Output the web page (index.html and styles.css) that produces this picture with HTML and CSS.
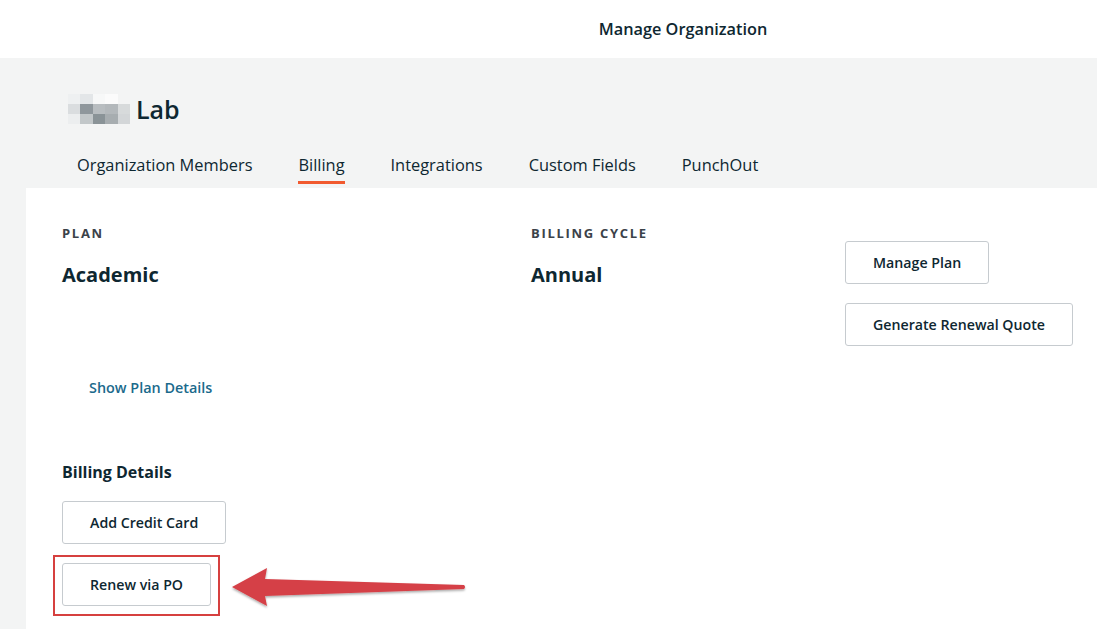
FILE: index.html
```html
<!DOCTYPE html>
<html lang="en">

<head>
    <meta charset="UTF-8">
    <meta name="viewport" content="width=device-width, initial-scale=1.0">
    <title>Manage Organization</title>
    <link rel="stylesheet" href="styles.css">
</head>

<body>
    <header class="topbar">
        <h1 class="topbar-title">Manage Organization</h1>
    </header>

    <main class="page">
        <div class="org-head">
            <div class="org-logo">
                <span style="background:#eef0f1"></span><span style="background:#e3e6e8"></span><span style="background:#f7f8f8"></span><span style="background:#fbfbfb"></span><span style="background:#f3f4f4"></span>
                <span style="background:#dadddf"></span><span style="background:#8f979c"></span><span style="background:#b8bdc0"></span><span style="background:#b3b8bb"></span><span style="background:#d7dadb"></span>
                <span style="background:#eceeef"></span><span style="background:#c2c7c9"></span><span style="background:#8a9397"></span><span style="background:#a7adb0"></span><span style="background:#d3d6d8"></span>
            </div>
            <h2 class="org-name">Lab</h2>
        </div>

        <nav class="tabs">
            <a class="tab">Organization Members</a>
            <a class="tab active">Billing</a>
            <a class="tab">Integrations</a>
            <a class="tab">Custom Fields</a>
            <a class="tab">PunchOut</a>
        </nav>

        <section class="panel">
            <div class="plan-row">
                <div class="plan-col">
                    <div class="label">PLAN</div>
                    <div class="value">Academic</div>
                </div>
                <div class="cycle-col">
                    <div class="label">BILLING CYCLE</div>
                    <div class="value">Annual</div>
                </div>
                <div class="actions">
                    <button class="btn">Manage Plan</button>
                    <button class="btn">Generate Renewal Quote</button>
                </div>
            </div>

            <a class="link-btn">Show Plan Details</a>

            <h3 class="section-title">Billing Details</h3>
            <div class="billing-actions">
                <button class="btn">Add Credit Card</button>
                <div class="highlight">
                    <button class="btn">Renew via PO</button>
                </div>
                <!-- annotation arrow -->
                <svg class="arrow" width="250" height="50" viewBox="0 0 250 50">
                    <defs>
                        <filter id="shadow" x="-10%" y="-30%" width="120%" height="160%">
                            <feDropShadow dx="0" dy="1.5" stdDeviation="1.2" flood-color="#000" flood-opacity="0.35" />
                        </filter>
                    </defs>
                    <path d="M2 23 L37 4 L35 15 L234 21 Q236 23 234 25 L35 32 L37 42 Z" fill="#d54047" filter="url(#shadow)" />
                </svg>
            </div>
        </section>
    </main>
</body>

</html>
```

FILE: styles.css
```css
* {
    box-sizing: border-box;
}

body {
    margin: 0;
    font-family: "Open Sans", sans-serif;
    color: #0e2731;
    background: #f3f4f4;
}

.topbar {
    height: 58px;
    background: #fff;
    display: flex;
    align-items: center;
    justify-content: center;
}

.topbar-title {
    margin: 0 0 0 269px;
    font-size: 16.3px;
    font-weight: 600;
}

.page {
    padding-left: 26px;
}

.org-head {
    display: flex;
    align-items: center;
    gap: 6px;
    padding: 12px 0 0 42px;
    height: 90px;
}

.org-logo {
    display: grid;
    grid-template-columns: repeat(5, 12.4px);
    grid-template-rows: repeat(3, 10px);
    width: 62px;
}

.org-name {
    margin: 0;
    font-size: 25px;
    font-weight: 600;
}

.tabs {
    display: flex;
    gap: 46px;
    padding-left: 51px;
    height: 40px;
    padding-top: 6px;
}

.tab {
    font-size: 16.4px;
    line-height: 22px;
    height: 30px;
    border-bottom: 3px solid transparent;
    color: #0e2731;
}

.tab.active {
    border-bottom-color: #f15a2f;
}

.panel {
    background: #fff;
    padding: 37px 0 10px 36px;
    min-height: 450px;
}

.plan-row {
    display: grid;
    grid-template-columns: 469px 314px auto;
}

.label {
    font-size: 13px;
    font-weight: 700;
    letter-spacing: 1.7px;
    color: #3b4249;
    line-height: 16px;
}

.value {
    margin-top: 22px;
    font-size: 20px;
    font-weight: 700;
    line-height: 24px;
}

.actions {
    display: flex;
    flex-direction: column;
    align-items: flex-start;
    gap: 19px;
    padding-top: 16px;
}

.btn {
    height: 43px;
    padding: 0 27px;
    background: #fff;
    border: 1px solid #c6cbcf;
    border-radius: 3px;
    font-family: inherit;
    font-size: 14.2px;
    font-weight: 600;
    color: #0e2731;
}

.link-btn {
    display: inline-block;
    margin: 33px 0 0 27px;
    font-size: 14.4px;
    font-weight: 600;
    color: #1b6a8c;
    line-height: 18px;
}

.section-title {
    margin: 64px 0 0;
    font-size: 16px;
    font-weight: 700;
    line-height: 20px;
}

.billing-actions {
    position: relative;
    display: flex;
    flex-direction: column;
    align-items: flex-start;
    margin-top: 19px;
}

.highlight {
    margin: 11px 0 0 -9px;
    padding: 6px 7px 8px 7px;
    border: 2px solid #d6403f;
}

.arrow {
    position: absolute;
    left: 168px;
    top: 63px;
}
```
